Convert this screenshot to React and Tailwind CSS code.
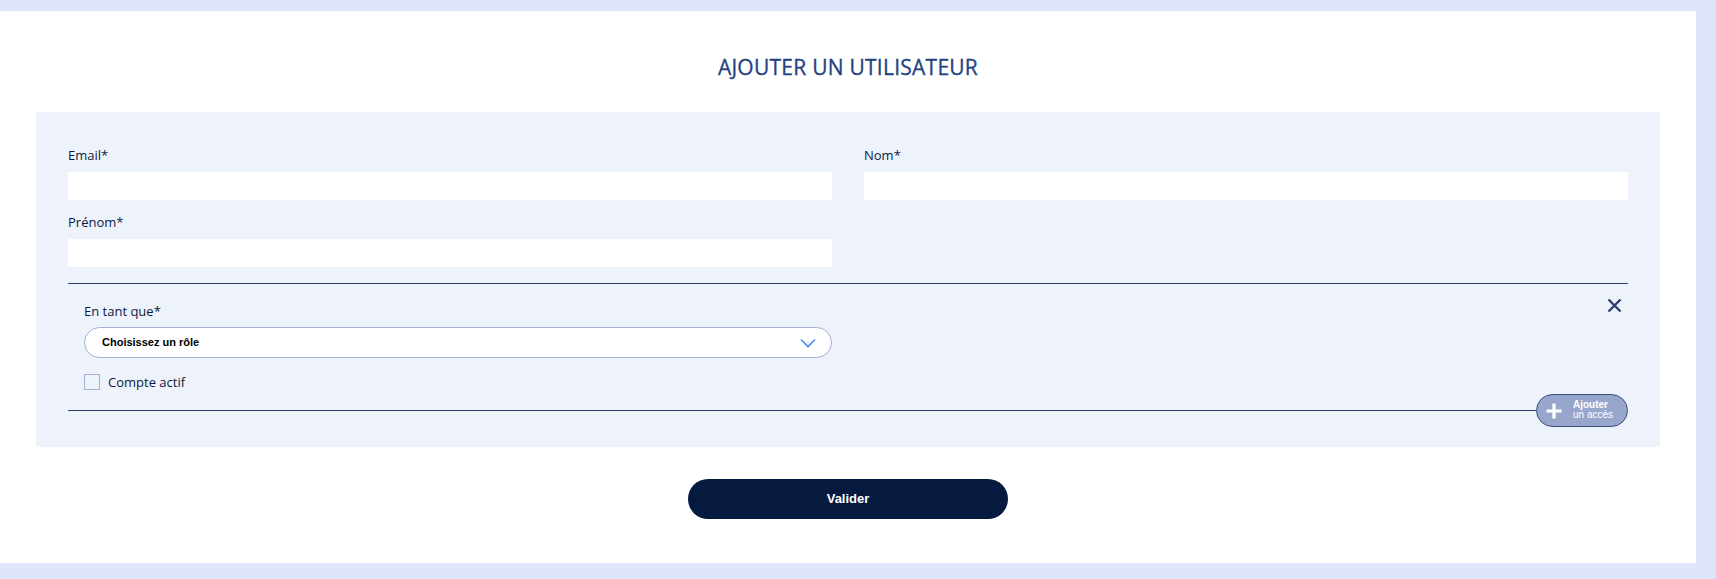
export default function App() {
  const os = { fontFamily: '"Open Sans", "Noto Sans", sans-serif' };
  const ar = { fontFamily: '"Liberation Sans", Arial, sans-serif' };
  return (
    <div className="w-full h-[579px] bg-[#e0e6f9] pt-[11px] overflow-hidden">
      <div className="w-[1696px] h-[552px] bg-white flex flex-col">
        <h1
          style={os}
          className="pt-[42px] text-center text-[21px] leading-[28px] font-normal tracking-[0.25px] text-[#24427f] [-webkit-text-stroke:0.3px_#24427f]"
        >
          AJOUTER UN UTILISATEUR
        </h1>
        <div className="mx-[36px] mt-[31px] bg-[#eef2fb] px-[32px] pt-[34px] pb-[20px]">
          <div className="grid grid-cols-2 gap-x-[32px] gap-y-[13px]">
            <div>
              <div style={os} className="text-[13px] leading-[18px] font-medium text-[#0b1a45] mb-[8px]">Email*</div>
              <div className="h-[28px] bg-white" />
            </div>
            <div>
              <div style={os} className="text-[13px] leading-[18px] font-medium text-[#0b1a45] mb-[8px]">Nom*</div>
              <div className="h-[28px] bg-white" />
            </div>
            <div>
              <div style={os} className="text-[13px] leading-[18px] font-medium text-[#0b1a45] mb-[8px]">Prénom*</div>
              <div className="h-[28px] bg-white" />
            </div>
          </div>
          <div className="mt-[16px] h-px bg-[#2d3f6c]" />
          <div className="flex justify-between pl-[16px]">
            <div className="w-[748px] pt-[18px]">
              <div style={os} className="text-[13px] leading-[18px] font-medium text-[#0b1a45] mb-[7px]">En tant que*</div>
              <div className="h-[31px] rounded-full bg-white border border-[#a3b0d4] flex items-center justify-between pl-[17px] pr-[15px]">
                <span style={ar} className="text-[11px] font-bold text-black">Choisissez un rôle</span>
                <svg width="16" height="10" viewBox="0 0 16 10" fill="none">
                  <path d="M1 1.5 L8 8.5 L15 1.5" stroke="#4a88ee" strokeWidth="1.6" />
                </svg>
              </div>
              <div className="mt-[16px] flex items-center h-[16px]">
                <div className="w-[16px] h-[16px] border-[1.5px] border-[#a7b2d3]" />
                <span style={os} className="ml-[8px] text-[13px] leading-[18px] font-medium text-[#0b1a45]">Compte actif</span>
              </div>
            </div>
            <div className="mt-[14px] mr-[6px]">
              <svg width="15" height="15" viewBox="0 0 15 15" fill="none">
                <path d="M1.5 1.5 L13.5 13.5 M13.5 1.5 L1.5 13.5" stroke="#2a3d6e" strokeWidth="2.4" />
              </svg>
            </div>
          </div>
          <div className="mt-[4px] flex items-center">
            <div className="flex-1 h-px bg-[#2d3f6c]" />
            <div className="w-[92px] h-[33px] rounded-full bg-[#98a6cc] border border-[#3a4d7e] flex items-center pl-[8px]">
              <svg width="18" height="18" viewBox="0 0 18 18" fill="none">
                <path d="M9 1.5 V16.5 M1.5 9 H16.5" stroke="white" strokeWidth="3.2" />
              </svg>
              <div style={ar} className="ml-[10px] flex flex-col text-white leading-[10px] mt-[-1px]">
                <span className="text-[10px] font-bold">Ajouter</span>
                <span className="text-[10px] text-white">un accès</span>
              </div>
            </div>
          </div>
        </div>
        <div className="mt-[32px] flex justify-center">
          <button
            style={ar}
            className="w-[320px] h-[40px] rounded-full bg-[#061a3f] text-white text-[13px] font-bold"
          >
            Valider
          </button>
        </div>
      </div>
    </div>
  );
}
